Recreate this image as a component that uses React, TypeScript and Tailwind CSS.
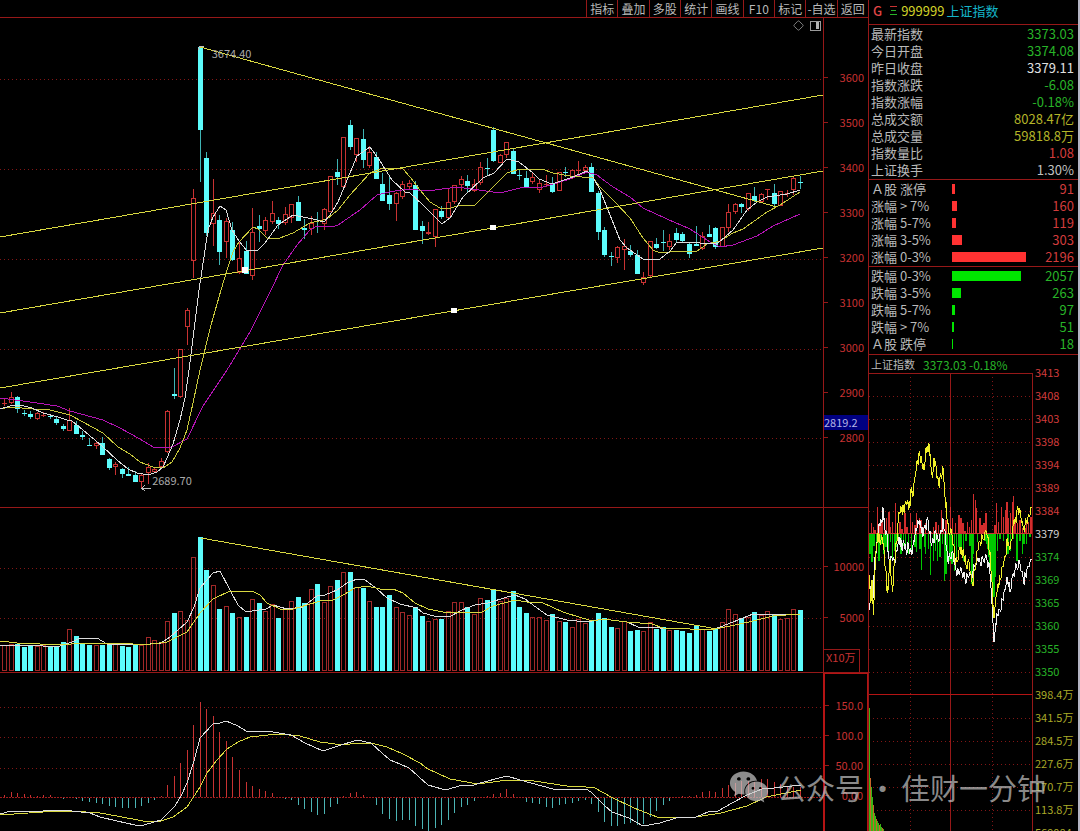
import React from "react";
import { Diamond } from "lucide-react";
import { FaWeixin } from "react-icons/fa";

type Direction = "up" | "down";
type Candle = [dir: Direction, high: number, top: number, bottom: number, low: number];
type Point = [number, number];

const U: Direction = "up";
const D: Direction = "down";

// One entry per trading day, in chart coordinates
const CANDLES: Candle[] = [
  [U, 398, 403, 404, 406], [U, 392, 397, 403, 404], [D, 396, 397, 409, 413], [D, 410, 413, 414, 416],
  [D, 411, 414, 417, 419], [U, 412, 413, 419, 420], [U, 412, 415, 416, 417], [D, 415, 416, 417, 419],
  [D, 416, 419, 423, 425], [D, 424, 426, 429, 431], [U, 408, 420, 431, 431], [D, 421, 425, 434, 434],
  [D, 431, 435, 437, 440], [D, 438, 445, 446, 446], [U, 441, 443, 446, 449], [D, 437, 443, 455, 455],
  [D, 458, 459, 468, 470], [U, 462, 464, 467, 475], [D, 468, 469, 474, 478], [D, 467, 474, 476, 476],
  [D, 471, 475, 482, 482], [U, 474, 475, 482, 488], [U, 463, 467, 473, 484], [U, 467, 469, 472, 473],
  [U, 458, 461, 467, 468], [U, 410, 411, 452, 453], [D, 368, 394, 396, 399], [U, 349, 349, 397, 398],
  [U, 308, 310, 327, 345], [U, 189, 198, 261, 278], [D, 46, 47, 130, 182], [D, 152, 158, 233, 236],
  [U, 179, 213, 224, 246], [D, 215, 220, 252, 265], [U, 218, 221, 242, 258], [D, 222, 230, 260, 261],
  [U, 242, 258, 273, 274], [D, 241, 251, 274, 274], [U, 208, 232, 276, 280], [D, 215, 226, 229, 242],
  [U, 217, 220, 231, 235], [U, 201, 213, 222, 224], [D, 217, 220, 224, 229], [U, 207, 214, 223, 225],
  [U, 204, 204, 218, 223], [D, 196, 202, 221, 221], [D, 219, 228, 230, 239], [U, 216, 223, 229, 235],
  [D, 212, 226, 227, 233], [U, 208, 209, 224, 230], [U, 176, 176, 212, 212], [D, 159, 172, 177, 185],
  [U, 137, 137, 187, 188], [D, 120, 125, 147, 150], [U, 138, 138, 155, 162], [D, 129, 139, 160, 168],
  [U, 146, 152, 166, 168], [D, 152, 157, 179, 179], [D, 173, 184, 201, 201], [D, 177, 195, 204, 210],
  [U, 192, 193, 204, 221], [U, 181, 184, 197, 199], [U, 180, 183, 187, 189], [D, 181, 185, 230, 230],
  [D, 221, 226, 231, 244], [U, 222, 232, 234, 235], [U, 209, 209, 237, 247], [D, 206, 211, 217, 219],
  [U, 189, 202, 218, 220], [U, 185, 185, 202, 204], [U, 176, 179, 185, 191], [D, 175, 181, 186, 192],
  [U, 179, 184, 191, 192], [U, 162, 167, 183, 185], [D, 158, 168, 169, 175], [D, 127, 130, 161, 162],
  [U, 154, 155, 163, 163], [U, 142, 142, 155, 158], [D, 149, 151, 174, 174], [D, 170, 175, 176, 180],
  [D, 171, 178, 187, 187], [U, 173, 177, 182, 184], [U, 180, 183, 190, 193], [U, 175, 184, 185, 187],
  [D, 177, 184, 192, 193], [U, 172, 172, 191, 191], [D, 167, 172, 173, 177], [U, 169, 170, 177, 179],
  [U, 161, 170, 171, 175], [U, 165, 167, 171, 173], [D, 163, 167, 192, 192], [D, 191, 193, 232, 240],
  [D, 227, 230, 255, 257], [D, 252, 256, 257, 266], [U, 246, 247, 258, 263], [U, 239, 246, 250, 270],
  [D, 245, 251, 255, 257], [D, 250, 255, 274, 274], [U, 272, 277, 283, 285], [U, 241, 241, 276, 278],
  [D, 238, 244, 248, 249], [D, 230, 242, 243, 251], [U, 234, 241, 247, 250], [D, 228, 233, 240, 242],
  [D, 232, 234, 241, 242], [D, 243, 244, 254, 258], [D, 226, 244, 246, 246], [U, 232, 236, 249, 250],
  [D, 225, 234, 237, 237], [D, 227, 228, 247, 249], [U, 227, 227, 247, 247], [U, 204, 212, 228, 232],
  [U, 203, 204, 212, 214], [D, 203, 204, 207, 213], [U, 193, 193, 209, 211], [D, 187, 196, 201, 202],
  [U, 193, 194, 202, 203], [U, 189, 189, 190, 200], [D, 184, 193, 204, 208], [U, 191, 191, 206, 206],
  [U, 190, 193, 194, 197], [U, 177, 178, 190, 195], [D, 176, 182, 183, 189],
];

const VOLUME_TOPS = [
  645, 644, 644, 647, 646, 646, 645, 647, 647, 642, 629, 636, 643, 645, 645, 645, 645, 643, 646, 647,
  644, 645, 637, 640, 643, 621, 613, 611, 620, 557, 537, 570, 585, 609, 606, 613, 617, 617, 599, 603,
  611, 604, 618, 609, 601, 597, 603, 589, 584, 602, 586, 580, 572, 572, 587, 588, 601, 607, 607, 595,
  607, 612, 615, 607, 616, 621, 619, 619, 611, 602, 602, 607, 614, 598, 600, 589, 601, 598, 591, 607,
  613, 617, 617, 620, 614, 621, 622, 627, 619, 623, 620, 613, 618, 627, 628, 621, 631, 630, 631, 622,
  629, 627, 630, 630, 631, 633, 625, 629, 631, 629, 622, 609, 614, 618, 617, 612, 615, 611, 614, 619,
  618, 609, 610,
];

const MACD = [
  2, 5, 4, 3, 2, 1, 2, 2, 0, -1, 0, -1, -3, -4, -5, -6, -8, -9, -10, -10, -10, -8, -5, -2, 1, 12, 21, 34,
  47, 72, 95, 88, 81, 65, 56, 40, 27, 15, 11, 8, 6, 4, 0, -1, -2, -7, -11, -14, -17, -16, -9, -6, 1, 4,
  5, 2, 0, -7, -16, -21, -23, -22, -22, -28, -31, -34, -30, -27, -22, -15, -9, -7, -3, 0, 1, 3, 4, 8, 3,
  0, -4, -5, -6, -9, -10, -7, -6, -5, -3, -2, -6, -14, -24, -28, -28, -26, -25, -27, -26, -19, -13, -7,
  -3, 0, 1, 1, 2, 5, 6, 5, 9, 12, 14, 16, 16, 15, 18, 18, 15, 13, 11, 10, 10,
];

const MA5 =
  "0,409 10,406 20,405 32,408 43,413 58,417 67,420 72,421 83,430 102,446 117,460 128,469 137,473 148,475 157,472 163,467 167,458 173,444 180,420 185,398 189,370 199,290 204,257 208,230 213,217 220,206 226,210 232,230 239,241 247,251 258,250 265,243 278,225 293,215 313,219 324,222 330,215 338,202 350,173 357,156 370,147 380,161 392,180 405,192 410,193 423,205 442,224 450,218 463,197 483,178 494,173 507,159 519,162 533,173 539,179 552,184 570,178 587,171 593,177 600,190 610,215 620,240 627,248 643,259 660,259 670,251 677,242 700,243 718,243 733,230 747,210 757,202 767,197 787,194 800,190";
const MA10 =
  "0,409 10,407 33,409 50,410 70,415 83,422 103,433 118,447 130,454 140,462 153,467 163,468 172,462 180,448 187,430 193,403 200,370 211,325 221,290 227,270 233,252 239,242 253,227 258,229 267,238 280,238 293,233 310,223 327,219 338,210 350,195 370,173 383,168 403,169 410,177 420,190 430,202 440,208 448,209 460,205 475,205 490,190 507,173 520,169 542,169 553,173 570,176 593,178 600,187 615,202 630,218 643,238 653,250 660,253 680,251 697,251 707,244 720,241 733,233 743,229 767,212 780,205 800,192";
const MA20 =
  "0,398 30,402 57,406 70,411 103,420 120,428 140,439 153,447 170,448 187,439 203,406 227,370 250,332 271,290 283,265 297,245 310,230 317,226 332,227 338,225 360,210 377,195 389,192 408,189 428,191 457,187 500,193 520,188 543,187 570,179 587,172 597,175 613,187 630,197 643,208 667,219 690,229 710,242 720,247 733,245 757,236 773,226 800,214";

const VOL_MA5 =
  "0,645 43,646 60,646 72,642 80,638 97,638 107,644 130,644 140,645 161,643 170,637 187,622 194,607 200,588 213,573 220,571 230,590 238,605 246,612 252,611 266,609 273,605 287,609 303,607 318,595 325,595 337,590 347,583 357,579 364,579 377,589 387,598 400,604 417,608 423,613 434,616 449,617 462,610 475,605 488,603 507,597 515,595 525,599 537,608 547,615 567,620 587,622 592,621 603,619 627,622 638,627 660,628 690,629 715,629 733,622 753,614 777,614 800,614";
const VOL_MA10 =
  "0,641 17,643 63,645 80,643 123,643 143,645 167,642 187,632 200,613 213,599 230,591 245,592 252,591 260,595 267,603 280,609 293,609 307,605 320,601 333,600 343,595 355,588 367,586 380,589 393,589 403,593 415,603 428,609 443,612 467,612 482,612 493,606 515,600 527,602 543,603 563,612 582,618 593,621 603,619 627,622 652,624 663,628 690,629 715,629 740,624 753,621 773,616 800,614";

const DIF =
  "0,814 11,811 43,811 50,810 72,811 90,813 100,817 117,821 135,825 144,825 161,820 175,806 182,794 187,783 194,761 200,738 213,724 220,723 226,721 238,726 246,731 267,731 291,735 305,743 323,751 338,746 357,740 371,743 382,753 390,760 400,764 409,768 428,785 442,789 449,789 459,786 474,785 480,783 507,776 520,780 553,789 586,789 591,792 605,806 612,812 629,818 643,826 660,823 676,818 696,817 708,812 718,811 732,803 747,795 762,789 774,788 801,785";
const DEA =
  "0,815 43,812 72,811 100,813 117,816 143,821 161,821 173,817 187,807 200,787 207,773 217,760 227,749 238,742 250,737 277,734 300,736 320,742 343,745 357,743 371,743 387,747 403,754 420,763 428,769 450,779 478,784 508,780 534,781 567,786 586,787 595,788 611,797 634,808 657,817 669,818 696,817 721,813 747,806 766,797 801,790";

// Intraday lines and bars use a grid three times finer than the panel
const INDEX_LINE =
  "28,720 34,640 38,700 45,560 52,520 58,460 64,455 70,415 75,480 82,500 88,590 95,560 104,575 110,545 118,500 125,535 132,520 138,540 146,530 155,555 162,510 168,480 175,455 182,460 188,500 195,465 205,455 213,520 220,510 228,490 235,515 244,480 250,450 257,510 263,570 270,560 280,550 288,600 296,610 304,595 316,635 322,615 333,615 345,590 352,565 360,575 370,570 380,560 390,610 396,700 402,815 408,760 412,735 420,720 428,690 435,660 442,620 450,665 460,610 470,590 480,580 490,630 497,620 504,590 515,570";
const AVERAGE_LINE =
  "28,615 32,700 36,630 40,735 45,600 50,520 55,490 60,520 66,500 72,540 80,640 83,670 90,570 97,665 104,570 110,520 117,425 125,415 131,425 138,395 145,400 149,415 154,350 158,380 165,320 172,270 180,258 186,280 192,300 199,230 203,245 207,220 213,290 217,325 222,265 229,300 236,345 243,320 250,295 255,380 260,430 266,490 275,480 285,570 292,575 300,530 306,555 311,545 318,585 328,580 337,645 345,600 352,540 360,515 368,505 380,485 386,520 392,580 398,680 402,745 408,680 415,640 420,630 428,590 436,560 442,505 448,540 455,510 462,450 467,455 474,412 482,435 490,475 500,455 507,440 515,412";

const BUY_BARS: Point[] = [
  [34, 30], [40, 20], [45, 10], [53, 80], [60, 30], [66, 35], [74, 40], [80, 45], [87, 65], [92, 20],
  [98, 35], [107, 90], [112, 20], [120, 35], [126, 12], [135, 60], [141, 20], [152, 60], [158, 35],
  [165, 25], [170, 60], [178, 45], [183, 40], [190, 20], [197, 30], [205, 25], [213, 5], [220, 20],
  [228, 35], [236, 25], [244, 70], [250, 20], [258, 40], [272, 80], [278, 45], [286, 30], [297, 55],
  [303, 45], [309, 30], [315, 8], [322, 35], [328, 20], [335, 40], [340, 117], [346, 100], [349, 75],
  [360, 45], [366, 25], [372, 30], [378, 60], [405, 25], [409, 90], [416, 35], [425, 80], [430, 50],
  [436, 70], [441, 95], [446, 45], [452, 60], [457, 95], [460, 112], [465, 40], [473, 30], [480, 40],
  [488, 15], [495, 15], [500, 30], [506, 35], [511, 50], [515, 50],
];
const SELL_BARS: Point[] = [
  [30, 60], [36, 85], [42, 35], [50, 60], [57, 80], [63, 30], [72, 60], [78, 40], [85, 70], [92, 25],
  [98, 80], [105, 50], [110, 40], [116, 20], [123, 60], [130, 35], [136, 45], [146, 60], [155, 55],
  [165, 40], [170, 55], [180, 45], [185, 108], [193, 40], [197, 60], [205, 45], [212, 123], [220, 80],
  [227, 50], [233, 80], [240, 70], [247, 30], [254, 140], [258, 120], [263, 60], [270, 80], [276, 90],
  [283, 110], [290, 70], [297, 40], [303, 60], [310, 80], [318, 20], [330, 35], [336, 150], [341, 60],
  [353, 25], [375, 20], [381, 30], [384, 45], [387, 70], [390, 90], [393, 110], [396, 130], [399, 160],
  [402, 190], [405, 130], [412, 50], [420, 15], [430, 20], [444, 60], [452, 50], [460, 15], [471, 80],
  [480, 20], [487, 60], [492, 30], [500, 30], [510, 10],
];
const TURNOVER_TOPS = [335, 405, 414, 424, 432, 440, 443, 446, 448, 450, 452, 451, 454, 455, 456];

const TOOLBAR = ["指标", "叠加", "多股", "统计", "画线", "F10", "标记", "-自选", "返回"];

const QUOTES = [
  { label: "最新指数", value: "3373.03", color: "text-[#28b428]" },
  { label: "今日开盘", value: "3374.08", color: "text-[#28b428]" },
  { label: "昨日收盘", value: "3379.11", color: "text-[#e0e0e0]" },
  { label: "指数涨跌", value: "-6.08", color: "text-[#28b428]" },
  { label: "指数涨幅", value: "-0.18%", color: "text-[#28b428]" },
  { label: "总成交额", value: "8028.47亿", color: "text-[#b4b428]" },
  { label: "总成交量", value: "59818.8万", color: "text-[#b4b428]" },
  { label: "指数量比", value: "1.08", color: "text-[#d23c3c]" },
  { label: "上证换手", value: "1.30%", color: "text-[#c0c0c0]" },
];

const GAINERS = [
  { label: "Ａ股 涨停", count: 91 },
  { label: "涨幅 > 7%", count: 160 },
  { label: "涨幅 5-7%", count: 119 },
  { label: "涨幅 3-5%", count: 303 },
  { label: "涨幅 0-3%", count: 2196 },
];
const LOSERS = [
  { label: "跌幅 0-3%", count: 2057 },
  { label: "跌幅 3-5%", count: 263 },
  { label: "跌幅 5-7%", count: 97 },
  { label: "跌幅 > 7%", count: 51 },
  { label: "Ａ股 跌停", count: 18 },
];
const MAX_COUNT = 2196;

const PRICE_AXIS = ["3600", "3500", "3400", "3300", "3200", "3100", "3000", "2900", "2800"];
const INTRADAY_AXIS = [
  "3413", "3408", "3403", "3398", "3394", "3389", "3384", "3379", "3374", "3369", "3365", "3360", "3355", "3350",
];
const TURNOVER_AXIS = ["398.4万", "341.5万", "284.5万", "227.6万", "170.7万", "113.8万", "569084"];

const dayX = (i: number) => Math.floor(4.7 + i * 6.522);

// Adds the minute-to-minute wobble between the main turning points
function withTicks(line: string): string {
  const points = line.split(" ").map((pair) => pair.split(",").map(Number));
  return points
    .flatMap(([x, y], i) => {
      const next = points[i + 1];
      if (!next) return [`${x},${y}`];
      const dx = (next[0] - x) / 3;
      const dy = (next[1] - y) / 3;
      const swing = 8 + ((i * 7) % 11);
      return [`${x},${y}`, `${x + dx},${y + dy + swing}`, `${x + dx * 2},${y + dy * 2 - swing}`];
    })
    .join(" ");
}

function GridLines({ ys, width }: { ys: number[]; width: number }) {
  return (
    <g stroke="#821616" strokeDasharray="1 3">
      {ys.map((y) => (
        <line key={y} x1={0} x2={width} y1={y + 0.5} y2={y + 0.5} />
      ))}
    </g>
  );
}

function Plot({ viewBox, className, label, children }: {
  viewBox: string;
  className: string;
  label: string;
  children: React.ReactNode;
}) {
  return (
    <svg
      viewBox={viewBox}
      preserveAspectRatio="none"
      shapeRendering="crispEdges"
      role="img"
      aria-label={label}
      fill="none"
      className={`block w-full ${className}`}
    >
      {children}
    </svg>
  );
}

function PriceChart() {
  return (
    <Plot viewBox="0 18 823 489" className="h-[489px]" label="日K线">
      <GridLines ys={[79, 169, 259, 349, 438]} width={823} />
      {CANDLES.map(([dir, high, top, bottom, low], i) => {
        const x = dayX(i);
        const height = Math.max(bottom - top, 1);
        return dir === "down" ? (
          <g key={i} fill="#5cfcfc">
            <rect x={x} y={high} width={1} height={low - high} fill="#3fb4b4" />
            <rect x={x - 2} y={top} width={5} height={height} />
          </g>
        ) : (
          <g key={i} fill="#c83232">
            <rect x={x} y={high} width={1} height={Math.max(top - high, 0)} />
            <rect x={x} y={bottom} width={1} height={Math.max(low - bottom, 0)} />
            {height < 3 ? (
              <rect x={x - 2} y={top} width={5} height={height} />
            ) : (
              <rect x={x - 1.5} y={top + 0.5} width={4} height={height - 1} fill="none" stroke="#c83232" />
            )}
          </g>
        );
      })}
      <polyline points={MA20} stroke="#b414b4" />
      <polyline points={MA10} stroke="#c8c83c" />
      <polyline points={MA5} stroke="#dcdcdc" />
      <g stroke="#d8d840">
        <line x1={200} y1={47} x2={777} y2={207} />
        <line x1={0} y1={237} x2={823} y2={95} />
        <line x1={0} y1={313} x2={823} y2={171} />
        <line x1={0} y1={388} x2={823} y2={248} />
      </g>
      <g fill="#fff">
        <rect x={242} y={267} width={6} height={6} />
        <rect x={490} y={225} width={6} height={5} />
        <rect x={451} y={308} width={6} height={5} />
      </g>
      <path d="M151 488.500H142M145 485L142 488.500L145 491M198 49.500L200 46.500H204" stroke="#c0c0c0" />
    </Plot>
  );
}

function VolumeChart() {
  return (
    <Plot viewBox="0 508 823 164" className="h-[164px]" label="成交量">
      <GridLines ys={[568, 618]} width={823} />
      {CANDLES.map(([dir], i) => {
        const x = dayX(i);
        const top = VOLUME_TOPS[i];
        return dir === "down" ? (
          <rect key={i} x={x - 2} y={top} width={5} height={671 - top} fill="#5cfcfc" />
        ) : (
          <rect key={i} x={x - 1.5} y={top + 0.5} width={4} height={670 - top} stroke="#a02828" />
        );
      })}
      <polyline points={VOL_MA5} stroke="#dcdcdc" />
      <polyline points={VOL_MA10} stroke="#d8d840" />
      <line x1={201} y1={538} x2={717} y2={629} stroke="#d8d840" />
    </Plot>
  );
}

function MacdChart() {
  return (
    <Plot viewBox="0 673 823 158" className="h-[158px]" label="MACD">
      <GridLines ys={[707, 737, 768]} width={823} />
      <line x1={0} x2={823} y1={797.5} y2={797.5} stroke="#a01c1c" strokeDasharray="2 1" />
      {MACD.map((value, i) => (
        <rect
          key={i}
          x={dayX(i)}
          y={value > 0 ? 797 - value : 798}
          width={1}
          height={Math.abs(value)}
          fill={value > 0 ? "#c83232" : "#4bb4b4"}
        />
      ))}
      <polyline points={DEA} stroke="#d8d840" />
      <polyline points={DIF} stroke="#dcdcdc" />
    </Plot>
  );
}

function IntradayChart() {
  const rows = Array.from({ length: 19 }, (_, i) => (i + 1) * 23);
  return (
    <Plot viewBox="0 0 163 458" className="h-[458px]" label="分时走势">
      <GridLines ys={rows.filter((y) => y !== 161 && y !== 322)} width={163} />
      <g stroke="#821616" strokeDasharray="1 3">
        <line x1={41.5} x2={41.5} y1={0} y2={458} />
        <line x1={123.5} x2={123.5} y1={0} y2={458} />
      </g>
      <g stroke="#961818">
        <line x1={0} x2={163} y1={0.5} y2={0.5} />
        <line x1={81.5} x2={81.5} y1={0} y2={458} />
        <line x1={0} x2={163} y1={321.5} y2={321.5} stroke="#b41414" />
      </g>
      <g transform="translate(-9 -3) scale(0.3333)">
        {BUY_BARS.map(([x, h]) => (
          <rect key={x} x={x - 2} y={490 - h} width={4} height={h} fill="#d22d2d" />
        ))}
        {SELL_BARS.map(([x, h]) => (
          <rect key={x} x={x - 2} y={492} width={4} height={h} fill="#00c800" />
        ))}
        <line x1={27} x2={517} y1={491} y2={491} stroke="#c83232" strokeWidth={3} />
        <polyline points={withTicks(INDEX_LINE)} stroke="#f0f0f0" strokeWidth={3} />
        <polyline points={withTicks(AVERAGE_LINE)} stroke="#f0f028" strokeWidth={3} />
      </g>
      {TURNOVER_TOPS.map((top, i) => (
        <rect key={i} x={i} y={top} width={1} height={458 - top} fill={i % 3 === 1 ? "#c86428" : "#3cb414"} />
      ))}
    </Plot>
  );
}

function AxisLabel({ children, className }: { children: React.ReactNode; className: string }) {
  return (
    <div className={`flex items-center justify-between ${className}`}>
      <span className="h-px w-1 bg-[#961818]" />
      <span>{children}</span>
    </div>
  );
}

function Breadth({ rows, bar, text }: { rows: { label: string; count: number }[]; bar: string; text: string }) {
  return (
    <table className="w-full table-fixed border-collapse">
      <colgroup>
        <col className="w-[83px]" />
        <col />
        <col className="w-[52px]" />
      </colgroup>
      <tbody>
        {rows.map(({ label, count }) => (
          <tr key={label} className="h-[17px]">
            <th className="whitespace-nowrap p-0 pl-0.5 text-left font-normal">{label}</th>
            <td className="p-0">
              <div className={`h-2.5 min-w-px ${bar}`} style={{ width: `${(count / MAX_COUNT) * 100}%` }} />
            </td>
            <td className={`p-0 pr-1 text-right ${text}`}>{count}</td>
          </tr>
        ))}
      </tbody>
    </table>
  );
}

function QuotePanel() {
  return (
    <aside className="w-[212px] shrink-0 border-l border-r-2 border-l-[#961818] border-r-[#b4b4c3] text-[13px] leading-[17px] text-[#b9b9b9]">
      <header className="flex h-[25px] items-center border-b border-[#961818] px-1 pb-1">
        <span className="font-medium text-[#e04646]">G</span>
        <svg viewBox="0 0 7 9" className="ml-2 mr-1 h-[9px] w-[7px]" shapeRendering="crispEdges" aria-hidden="true">
          <path d="M0 .5H7" stroke="#c83232" />
          <path d="M1 4.500H6M0 8.500H7" stroke="#28b428" />
        </svg>
        <span className="text-[#d2d228]">999999</span>
        <h1 className="ml-0.5 text-[#14b4c8]">上证指数</h1>
      </header>

      <div className="border-b border-[#961818] pb-px">
        <table className="w-full border-collapse">
          <tbody>
            {QUOTES.map(({ label, value, color }) => (
              <tr key={label} className="h-[17px]">
                <th className="p-0 pl-0.5 text-left font-normal">{label}</th>
                <td className={`p-0 pr-1 text-right ${color}`}>{value}</td>
              </tr>
            ))}
          </tbody>
        </table>
      </div>
      <div className="border-b border-[#961818] pb-px">
        <Breadth rows={GAINERS} bar="bg-[#ff3232]" text="text-[#d23c3c]" />
      </div>
      <div className="border-b border-[#961818] pb-0.5">
        <Breadth rows={LOSERS} bar="bg-[#00e600]" text="text-[#28b428]" />
      </div>

      <div className="flex text-[11px]">
        <div className="min-w-0 flex-1">
          <h2 className="flex h-[18px] items-center gap-2 pl-0.5">
            上证指数
            <span className="whitespace-nowrap text-[12px] text-[#28b428]">3373.03 -0.18%</span>
          </h2>
          <div className="border-r border-[#961818]">
            <IntradayChart />
          </div>
        </div>
        <div className="w-[45px] pl-0.5 pt-1.5">
          {INTRADAY_AXIS.map((label, i) => (
            <div
              key={label}
              className={`flex h-[23px] items-center ${
                i < 7 ? "text-[#d23c3c]" : i === 7 ? "text-[#d2d2d2]" : "text-[#28b428]"
              }`}
            >
              {label}
            </div>
          ))}
          {TURNOVER_AXIS.map((label) => (
            <div key={label} className="flex h-[23px] items-center whitespace-nowrap text-[#aaaa28]">
              {label}
            </div>
          ))}
        </div>
      </div>
    </aside>
  );
}

export default function App(): React.ReactElement {
  return (
    <div className="relative flex h-screen overflow-hidden bg-black font-['Noto_Sans_CJK_SC','Noto_Sans',sans-serif]">
      <main className="min-w-0 flex-1">
        <nav className="flex h-[18px] justify-end border-b border-[#961818]">
          <div className="grid w-[282px] grid-cols-9">
            {TOOLBAR.map((item) => (
              <button
                key={item}
                type="button"
                className="whitespace-nowrap border-l border-[#961818] text-center text-[12px] leading-[16px] text-[#b9b9b9]"
              >
                {item}
              </button>
            ))}
          </div>
        </nav>

        <section className="flex border-b border-[#961818]">
          <div className="relative min-w-0 flex-1">
            <PriceChart />
            <span className="absolute left-1/4 top-[27px] pl-1.5 text-[11px] leading-4 text-[#aaaaaa]">3674.40</span>
            <span className="absolute left-[18%] top-[454px] pl-1 text-[11px] leading-4 text-[#aaaaaa]">2689.70</span>
            <div className="absolute right-0.5 top-0.5 flex gap-1.5 text-[#8c8c8c]">
              <button type="button" aria-label="标记">
                <Diamond size={11} strokeWidth={2} />
              </button>
              <button type="button" aria-label="侧栏">
                <svg viewBox="0 0 11 11" className="h-[11px] w-[11px]" fill="none" shapeRendering="crispEdges">
                  <rect x="0.5" y="1" width="10" height="9" stroke="#9b9b9b" />
                  <rect x="6" y="2" width="3" height="7" fill="#b4b4b4" />
                </svg>
              </button>
            </div>
          </div>
          <div className="relative w-[45px] border-l border-[#961818] pr-1 pt-[37px] text-[11px] text-[#c83232]">
            {PRICE_AXIS.map((label) => (
              <AxisLabel key={label} className="h-[45px]">
                {label}
              </AxisLabel>
            ))}
            <span className="absolute inset-x-0 top-[397px] h-[15px] bg-[#000082] leading-[15px] text-[#b4b4e6]">
              2819.2
            </span>
          </div>
        </section>

        <section className="flex border-b border-[#961818]">
          <div className="min-w-0 flex-1">
            <VolumeChart />
          </div>
          <div className="flex w-[45px] flex-col border-l border-[#961818] text-[11px] text-[#c83232]">
            <div className="pr-1 pt-[33px]">
              <AxisLabel className="h-[51px]">10000</AxisLabel>
              <AxisLabel className="h-[51px]">5000</AxisLabel>
            </div>
            <div className="mt-auto h-[23px] w-[36px] whitespace-nowrap border-r border-t border-[#961818] pl-0.5 leading-[14px]">
              X10万
            </div>
          </div>
        </section>

        <section className="flex">
          <div className="min-w-0 flex-1">
            <MacdChart />
          </div>
          <div className="w-[45px] border-l-2 border-r border-t border-[#b41414] pr-1 pt-4 text-[11px] text-[#c83232]">
            {["150.0", "100.0", "50.00", "0.00"].map((label) => (
              <AxisLabel key={label} className="h-[30px]">
                {label}
              </AxisLabel>
            ))}
          </div>
        </section>
      </main>

      <QuotePanel />

      <div className="absolute bottom-[22px] right-[34px] flex items-center gap-2 text-[29px] leading-[44px] text-[#c8c8c8]/70">
        <FaWeixin size={40} />
        <span className="flex gap-1 whitespace-nowrap">
          <span>公众号</span>
          <span>·</span>
          <span>佳财一分钟</span>
        </span>
      </div>
    </div>
  );
}
